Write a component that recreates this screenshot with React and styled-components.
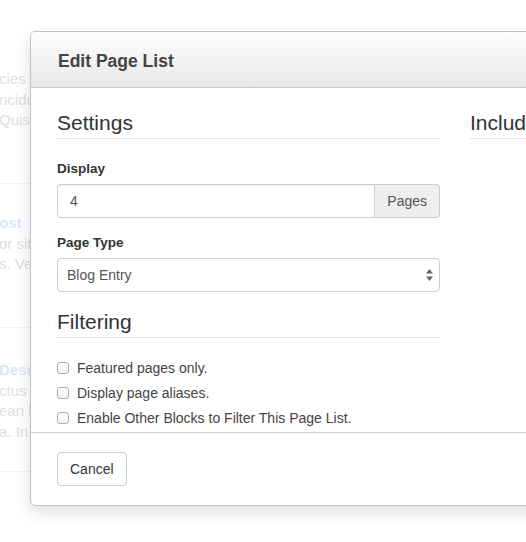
import React from "react";
import styled, { createGlobalStyle } from "styled-components";

const GlobalStyle = createGlobalStyle`
    html, body {
        margin: 0;
        padding: 0;
        background: #fff;
        overflow: hidden;
    }
    body {
        font-family: "Liberation Sans", Arial, Helvetica, sans-serif;
        color: #333;
    }
    * { box-sizing: border-box; }
`;

const Page = styled.div`
    position: relative;
    width: 526px;
    height: 542px;
    overflow: hidden;
`;

/* the page that lies behind the dialog, washed out by the overlay */
const Behind = styled.div`
    padding-top: 69px;
    margin-left: -1px;
    width: 32px;
    overflow: hidden;
`;
const Post = styled.div`
    padding-top: ${p => p.$top}px;
    padding-bottom: ${p => p.$bottom}px;
    border-bottom: 1px solid #f3f3f3;
`;
const PostTitle = styled.div`
    font-size: 15px;
    font-weight: bold;
    line-height: 22px;
    color: #dbe8f6;
    white-space: nowrap;
`;
const PostLine = styled.div`
    font-size: 15px;
    line-height: 20.5px;
    color: #e0e0e0;
    white-space: nowrap;
`;

const Dialog = styled.div`
    position: absolute;
    left: 30px;
    top: 31px;
    width: 860px;
    background: #fff;
    border: 1px solid #b7c3cd;
    border-radius: 5px;
    box-shadow: 0 6px 16px rgba(0, 0, 0, 0.13);
`;
const Header = styled.div`
    display: flex;
    align-items: center;
    height: 56px;
    padding: 3px 27px 0;
    background: linear-gradient(#fdfdfd, #e8e8e8);
    border-bottom: 1px solid #c9c9c9;
    border-radius: 4px 4px 0 0;
`;
const Title = styled.h1`
    margin: 0;
    font-size: 17.5px;
    font-weight: bold;
    color: #444;
`;
const Body = styled.div`
    height: 344px;
    overflow: hidden;
    padding: 20px 26px 0;
    display: grid;
    grid-template-columns: 383px 383px;
    column-gap: 30px;
    align-items: start;
`;
const Column = styled.div``;
const Legend = styled.div`
    font-size: 21px;
    line-height: 30px;
    color: #333;
    border-bottom: 1px solid #e5e5e5;
    margin-bottom: 20px;
    white-space: nowrap;
`;
const Group = styled.div`
    margin-bottom: 15px;
`;
const Label = styled.label`
    display: block;
    font-size: 13.5px;
    font-weight: bold;
    line-height: 20px;
    margin-bottom: 5px;
    color: #333;
`;
const InputGroup = styled.div`
    display: flex;
    height: 34px;
`;
const Input = styled.input`
    flex: 1;
    min-width: 0;
    height: 34px;
    padding: 6px 12px;
    font: 14px "Liberation Sans", Arial, sans-serif;
    color: #555;
    border: 1px solid #ccc;
    border-radius: 4px 0 0 4px;
    box-shadow: inset 0 1px 1px rgba(0, 0, 0, 0.04);
    outline: none;
`;
const Addon = styled.span`
    display: flex;
    align-items: center;
    padding: 0 12px;
    font-size: 14px;
    color: #555;
    background: #eee;
    border: 1px solid #ccc;
    border-left: 0;
    border-radius: 0 4px 4px 0;
`;
const SelectBox = styled.div`
    position: relative;
    height: 34px;
`;
const Select = styled.select`
    appearance: none;
    width: 100%;
    height: 34px;
    padding: 0 24px 0 9px;
    font: 14px "Liberation Sans", Arial, sans-serif;
    color: #555;
    background: #fff;
    border: 1px solid #ccc;
    border-radius: 4px;
    outline: none;
`;
const Arrows = styled.svg`
    position: absolute;
    right: 7px;
    top: 11px;
    pointer-events: none;
`;
const Check = styled.label`
    display: flex;
    align-items: center;
    height: 20px;
    margin-top: ${p => (p.$first ? 0 : 5)}px;
    font-size: 14px;
    color: #444;
    white-space: nowrap;
`;
const Box = styled.input`
    appearance: none;
    width: 12px;
    height: 12px;
    margin: 0 8px 0 0;
    border: 1px solid #aeaeae;
    border-radius: 3px;
    background: linear-gradient(#fff, #f3f3f3);
`;
const Footer = styled.div`
    padding: 19px 26px;
    border-top: 1px solid #cbd3d9;
`;
const Button = styled.button`
    height: 34px;
    padding: 0 12px;
    font: 14px "Liberation Sans", Arial, sans-serif;
    color: #333;
    background: #fff;
    border: 1px solid #ccc;
    border-radius: 4px;
`;

const behind = [
    { top: 0, bottom: 52, lines: ["cies", "ncidu", "Quisc"] },
    { top: 28, bottom: 52, title: "ost", lines: ["or sit", "s. Ve"] },
    { top: 31, bottom: 29, title: "Desc", lines: ["ctus n", "ean la", "a. In a"] },
];

export default function App() {
    return <Page>
        <GlobalStyle />
        <Behind>
            {behind.map((b, i) => <Post key={i} $top={b.top} $bottom={b.bottom}>
                {b.title && <PostTitle>{b.title}</PostTitle>}
                {b.lines.map(l => <PostLine key={l}>{l}</PostLine>)}
            </Post>)}
        </Behind>

        <Dialog>
            <Header>
                <Title>Edit Page List</Title>
            </Header>
            <Body>
                <Column>
                    <Legend>Settings</Legend>
                    <Group>
                        <Label>Display</Label>
                        <InputGroup>
                            <Input defaultValue="4" />
                            <Addon>Pages</Addon>
                        </InputGroup>
                    </Group>
                    <Group>
                        <Label>Page Type</Label>
                        <SelectBox>
                            <Select defaultValue="blog">
                                <option value="blog">Blog Entry</option>
                            </Select>
                            <Arrows width="7" height="12" viewBox="0 0 7 12">
                                <path d="M3.5 0 L7 4.5 L0 4.5 Z" fill="#666" />
                                <path d="M3.5 12 L7 7.5 L0 7.5 Z" fill="#666" />
                            </Arrows>
                        </SelectBox>
                    </Group>
                    <Legend>Filtering</Legend>
                    <Check $first><Box type="checkbox" />Featured pages only.</Check>
                    <Check><Box type="checkbox" />Display page aliases.</Check>
                    <Check><Box type="checkbox" />Enable Other Blocks to Filter This Page List.</Check>
                </Column>
                <Column>
                    <Legend>Include Date</Legend>
                </Column>
            </Body>
            <Footer>
                <Button>Cancel</Button>
            </Footer>
        </Dialog>
    </Page>;
}
